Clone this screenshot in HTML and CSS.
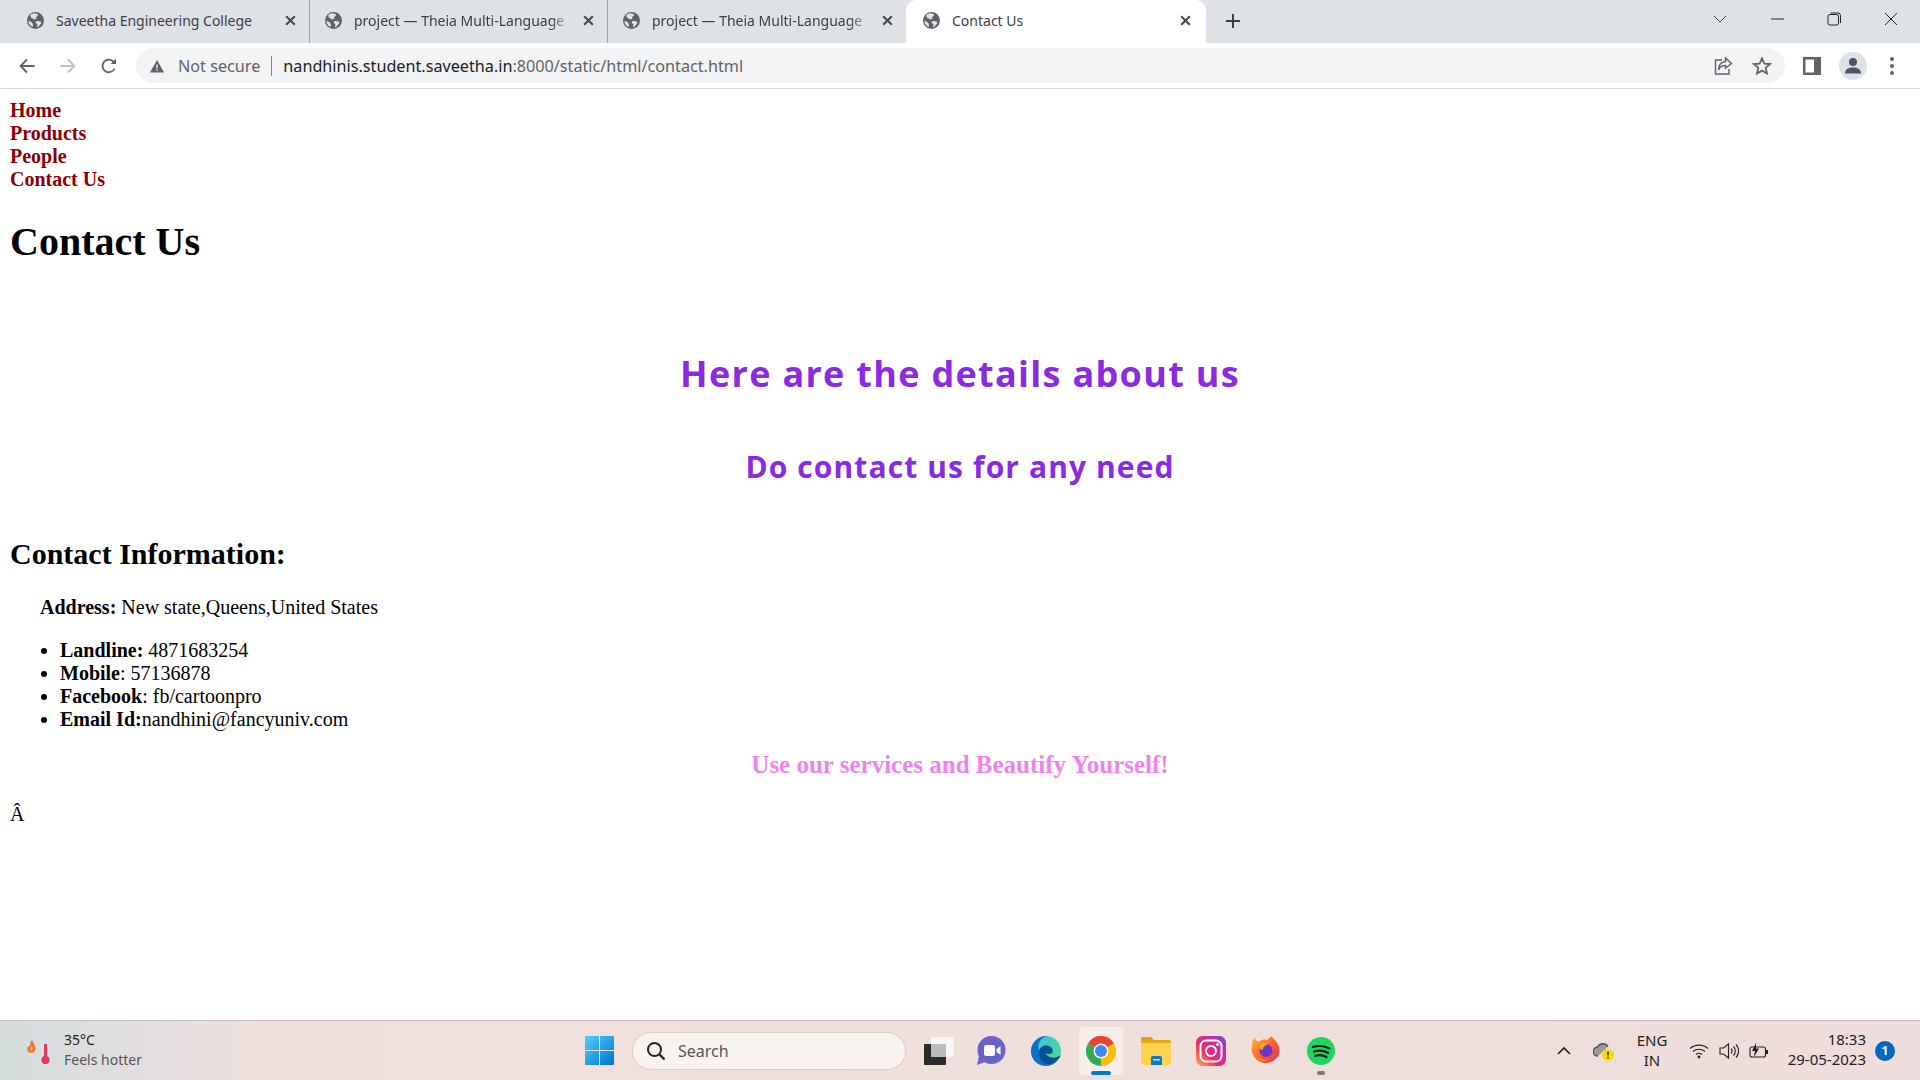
FILE: index.html
```html
<!DOCTYPE html>
<html lang="en">
<head>
  <meta charset="UTF-8">
  <title>Contact Us</title>
  <link rel="stylesheet" href="styles.css">
</head>
<body>
  <svg class="defs" width="0" height="0">
    <symbol id="globe" viewBox="0 0 16 16">
      <circle cx="8" cy="8" r="8" fill="#5f6368"/>
      <path d="M3 2.6 6.4 1.2 9.6 1.6 10.6 3 8.4 5 9 6.4 6.6 7 5 5.8 3.6 5.2ZM8.6 8.4 12.6 8.8 13.6 10.4 11 13.6 9.4 14.4 9.8 11.6 8.2 10.4ZM1.4 8.2 4 9.4 5.6 11.4 5.4 14 3 12.6 1.6 10.4Z" fill="#dee1e6"/>
    </symbol>
    <symbol id="close" viewBox="0 0 12 12">
      <path d="M2 2 10 10M10 2 2 10" stroke="#45484c" stroke-width="1.9" fill="none"/>
    </symbol>
  </svg>

  <header class="browser">
    <div class="tabstrip">
      <div class="tab">
        <svg class="favicon"><use href="#globe"/></svg>
        <span class="tab-title">Saveetha Engineering College</span>
        <svg class="tab-close"><use href="#close"/></svg>
      </div>
      <div class="tab">
        <svg class="favicon"><use href="#globe"/></svg>
        <span class="tab-title tab-title-fade">project — Theia Multi-Language</span>
        <svg class="tab-close"><use href="#close"/></svg>
      </div>
      <div class="tab">
        <svg class="favicon"><use href="#globe"/></svg>
        <span class="tab-title tab-title-fade">project — Theia Multi-Language</span>
        <svg class="tab-close"><use href="#close"/></svg>
      </div>
      <div class="tab tab-active">
        <svg class="favicon"><use href="#globe"/></svg>
        <span class="tab-title">Contact Us</span>
        <svg class="tab-close"><use href="#close"/></svg>
      </div>
      <svg class="new-tab" width="16" height="16" viewBox="0 0 16 16"><path d="M8 1V15M1 8H15" stroke="#3c4043" stroke-width="2"/></svg>
      <div class="window-controls">
        <svg width="14" height="8" viewBox="0 0 14 8"><path d="M1 1 7 7 13 1" stroke="#45484c" fill="none"/></svg>
        <svg width="14" height="14" viewBox="0 0 14 14"><path d="M1 7H14" stroke="#222"/></svg>
        <svg width="14" height="14" viewBox="0 0 14 14"><rect x="1" y="2.5" width="10.5" height="10.5" rx="2" stroke="#222" fill="none"/><path d="M3.500 1H11A2.500 2.500 0 0 1 13.500 3.500V11" stroke="#222" fill="none"/></svg>
        <svg width="14" height="14" viewBox="0 0 14 14"><path d="M1 1 13 13M13 1 1 13" stroke="#222" fill="none"/></svg>
      </div>
    </div>
    <div class="toolbar">
      <svg class="nav-btn" width="18" height="18" viewBox="0 0 18 18"><path d="M16.500 9H2.500M9 2.500 2.500 9 9 15.500" stroke="#5f6368" stroke-width="1.800" fill="none"/></svg>
      <svg class="nav-btn" width="18" height="18" viewBox="0 0 18 18"><path d="M1.500 9H15.500M9 2.500 15.500 9 9 15.500" stroke="#bdc1c6" stroke-width="1.800" fill="none"/></svg>
      <svg class="nav-btn" width="18" height="18" viewBox="0 0 18 18"><path d="M14.600 11.500A6.300 6.300 0 1 1 13.800 5" stroke="#5f6368" stroke-width="1.800" fill="none"/><path d="M16 1.500V7H10.500Z" fill="#5f6368"/></svg>
      <div class="omnibox">
        <svg width="16" height="16" viewBox="0 0 16 16"><path d="M8 2 15 14.500H1Z" fill="#5f6368"/><path d="M8 6.500V10.500M8 11.500V13" stroke="#f1f3f4" stroke-width="1.300"/></svg>
        <span class="not-secure">Not secure</span>
        <span class="url"><b>nandhinis.student.saveetha.in</b>:8000/static/html/contact.html</span>
        <svg class="share" width="20" height="20" viewBox="0 0 20 20"><path d="M9 4H2.500V18H16V13" stroke="#5f6368" stroke-width="1.400" fill="none"/><path d="M12.500 2 18.500 7.500 12.500 12V9.500C9 9.500 6.500 11 5.500 14 5.500 9.500 8 6 12.500 5.500Z" stroke="#5f6368" stroke-width="1.400" fill="none"/></svg>
        <svg class="star" width="20" height="20" viewBox="0 0 20 20"><path d="M10 2.300 12.300 7.600 18 8.100 13.700 11.900 15 17.500 10 14.600 5 17.500 6.300 11.900 2 8.100 7.700 7.600Z" stroke="#5f6368" stroke-width="1.800" fill="none"/></svg>
      </div>
      <svg class="side-panel" width="18" height="18" viewBox="0 0 18 18"><rect width="18" height="18" fill="#5f6368"/><rect x="2.500" y="2.500" width="8.500" height="13" fill="#fff"/></svg>
      <div class="avatar">
        <svg width="18" height="18" viewBox="0 0 18 18"><circle cx="9" cy="5" r="4" fill="#4a5568"/><path d="M1 16.500C1 12 5 10.500 9 10.500S17 12 17 16.500Z" fill="#4a5568"/></svg>
      </div>
      <div class="menu-dots"><i></i><i></i><i></i></div>
    </div>
  </header>

  <main class="page">
    <nav class="site-nav">
      <a href="#">Home</a>
      <a href="#">Products</a>
      <a href="#">People</a>
      <a href="#">Contact Us</a>
    </nav>
    <h1>Contact Us</h1>
    <div class="intro">
      <h1>Here are the details about us</h1>
      <h2>Do contact us for any need</h2>
    </div>
    <h2 class="info-title">Contact Information:</h2>
    <p class="address"><b>Address:</b> New state,Queens,United States</p>
    <ul>
      <li><b>Landline:</b> 4871683254</li>
      <li><b>Mobile</b>: 57136878</li>
      <li><b>Facebook</b>: fb/cartoonpro</li>
      <li><b>Email Id:</b>nandhini@fancyuniv.com</li>
    </ul>
    <h3 class="slogan">Use our services and Beautify Yourself!</h3>
    <p class="stray">Â</p>
  </main>

  <footer class="taskbar">
    <div class="weather">
      <svg width="30" height="34" viewBox="0 0 30 34">
        <path d="M5 12C7 13 5 9 8 6 9 9 12 11 11.500 15 11.200 18 8.500 19 7 19 4 19 2.500 16 3.500 13Z" fill="#f0743a"/>
        <path d="M7 17C5.500 16 6 14 7.500 12.500 8.500 14 9.500 16 7 17Z" fill="#fbc65a"/>
        <rect x="17" y="2" width="9" height="24" rx="4.500" fill="#cfe3f5"/>
        <circle cx="21.500" cy="26" r="6.500" fill="#cfe3f5"/>
        <rect x="20" y="10" width="3" height="16" fill="#e8385a"/>
        <circle cx="21.500" cy="26" r="4.200" fill="#e8385a"/>
      </svg>
      <div class="weather-text">
        <span>35°C</span>
        <span class="feels">Feels hotter</span>
      </div>
    </div>
    <div class="apps">
      <svg class="start" width="29" height="29" viewBox="0 0 29 29">
        <defs>
          <linearGradient id="win" x1="0" y1="0" x2="1" y2="1"><stop offset="0" stop-color="#52cffb"/><stop offset="1" stop-color="#0071cf"/></linearGradient>
        </defs>
        <path d="M0 1A1 1 0 0 1 1 0H14V14H0ZM15 0H28A1 1 0 0 1 29 1V14H15ZM0 15H14V29H1A1 1 0 0 1 0 28ZM15 15H29V28A1 1 0 0 1 28 29H15Z" fill="url(#win)"/>
      </svg>
      <div class="search">
        <svg width="20" height="20" viewBox="0 0 20 20"><circle cx="8.500" cy="8.500" r="6.500" stroke="#222" stroke-width="2" fill="none"/><path d="M13.500 13.500 18.500 18.500" stroke="#222" stroke-width="2.400"/></svg>
        <span>Search</span>
      </div>
      <div class="app app-task-view">
        <svg width="30" height="28" viewBox="0 0 30 28"><rect x="7" y="0" width="23" height="20" rx="1" fill="#f6f6f6"/><rect x="0" y="7" width="22" height="21" rx="1" fill="#2a2a2a"/><rect x="7" y="7" width="15" height="13" fill="#bcbcbc"/></svg>
      </div>
      <div class="app">
        <svg width="30" height="30" viewBox="0 0 30 30"><circle cx="15.500" cy="14" r="14" fill="#6b62c9"/><path d="M3 20 1 29 9 26Z" fill="#6b62c9"/><rect x="8" y="9" width="11" height="11" rx="2" fill="#fff"/><path d="M20.500 13 24.500 10V19L20.500 16Z" fill="#fff"/></svg>
      </div>
      <div class="app">
        <svg width="32" height="32" viewBox="0 0 32 32">
          <defs><linearGradient id="edge" x1="0" y1="0" x2="1" y2="1"><stop offset="0" stop-color="#35c1f1"/><stop offset="1" stop-color="#53e07a"/></linearGradient></defs>
          <circle cx="16" cy="16" r="15" fill="url(#edge)"/>
          <path d="M1 16C1 7 9 1 17 1 10 3 7 9 9 16 11 24 19 29 27 26 24 29 20 31 16 31 7 31 1 24 1 16Z" fill="#0c70c4"/>
          <path d="M9 17C9 12 14 9.500 19 11 23 12.500 23.500 16.500 22 18 20 20 17 18 15 18.500 18 22 24 25 31 20 29 25 24 29 18 29 13 29 9 24 9 17Z" fill="#0a4f96"/>
        </svg>
      </div>
      <div class="app app-active">
        <svg width="30" height="30" viewBox="0 0 30 30">
          <path d="M15 15 2 7.500A15 15 0 0 1 28 7.500Z" fill="#ea4335"/>
          <path d="M15 15 28 7.500A15 15 0 0 1 15 30Z" fill="#fbbc04"/>
          <path d="M15 15 15 30A15 15 0 0 1 2 7.500Z" fill="#34a853"/>
          <circle cx="15" cy="15" r="7.500" fill="#fff"/>
          <circle cx="15" cy="15" r="6" fill="#4285f4"/>
        </svg>
        <i class="running running-blue"></i>
      </div>
      <div class="app">
        <svg width="30" height="28" viewBox="0 0 30 28"><path d="M0 2A2 2 0 0 1 2 0H10L13 3H28A2 2 0 0 1 30 5V8H0Z" fill="#e0a214"/><path d="M0 5H30V26A2 2 0 0 1 28 28H2A2 2 0 0 1 0 26Z" fill="#fcd34f"/><path d="M13 4 0 4V6H30V4Z" fill="#e6a81b"/><path d="M12 19H19Q21 19 21 21V28H10V21Q10 19 12 19Z" fill="#1175c8"/><rect x="12" y="22" width="7" height="1.500" fill="#fff" opacity=".8"/></svg>
      </div>
      <div class="app">
        <svg width="30" height="30" viewBox="0 0 30 30">
          <defs><linearGradient id="insta" x1="0" y1="1" x2="1" y2="0"><stop offset="0" stop-color="#fdb33b"/><stop offset=".4" stop-color="#f0276b"/><stop offset=".75" stop-color="#c02fb0"/><stop offset="1" stop-color="#5a52d6"/></linearGradient></defs>
          <rect width="30" height="30" rx="6.500" fill="url(#insta)"/>
          <rect x="4.500" y="4.500" width="21" height="21" rx="5.500" stroke="#fff" stroke-width="2" fill="none"/>
          <circle cx="15" cy="15" r="5" stroke="#fff" stroke-width="2" fill="none"/>
          <circle cx="21.500" cy="8.500" r="1.400" fill="#fff"/>
        </svg>
      </div>
      <div class="app">
        <svg width="30" height="30" viewBox="0 0 30 30">
          <defs><linearGradient id="fox" x1="0" y1="0" x2="1" y2="1"><stop offset="0" stop-color="#ffbe2e"/><stop offset=".55" stop-color="#ff5a35"/><stop offset="1" stop-color="#e8225a"/></linearGradient></defs>
          <path d="M1 10C1 6 2 3 4 1 4 4 6 5.500 8 5.500 11 3 14 3 17 4 16 3 19 2 20 0 23 3 29 8 28.500 16A14 14 0 1 1 1 10Z" fill="url(#fox)"/>
          <circle cx="15" cy="14.500" r="6.500" fill="#6a37c4"/>
          <path d="M9 9C11 6 16 7 17 9 14 9 12 11 12 14 9 14 8 11 9 9Z" fill="#ff9a2e"/>
          <path d="M4 17C6 23 14 26 21 22 24 20 24 17 23 14 25 20 18 27 10 25 7 24 5 21 4 17Z" fill="#ff8a1f"/>
        </svg>
      </div>
      <div class="app">
        <svg width="28" height="28" viewBox="0 0 28 28"><circle cx="14" cy="14" r="14" fill="#1ed760"/><path d="M6 10C11 8.500 17 8.700 22.500 11.500M7 14.500C11.500 13.200 16.500 13.500 21 16M8 18.800C12 17.800 16 18 19.500 20" stroke="#1a1a1a" stroke-width="2.200" stroke-linecap="round" fill="none"/></svg>
        <i class="running"></i>
      </div>
    </div>
    <div class="tray">
      <svg class="tray-chevron" width="14" height="9" viewBox="0 0 14 9"><path d="M1 8 7 2 13 8" stroke="#222" stroke-width="1.600" fill="none"/></svg>
      <svg class="tray-cloud" width="22" height="22" viewBox="0 0 22 22"><path d="M5 16A4.500 4.500 0 0 1 4.500 7 6 6 0 0 1 15 6.500" stroke="#555" stroke-width="1.500" fill="#9a9a9a"/><circle cx="15" cy="15" r="6" fill="#f7dc00"/><path d="M15 11.500V15.500M15 16.800V18.500" stroke="#222" stroke-width="1.500"/></svg>
      <div class="lang"><span>ENG</span><span>IN</span></div>
      <svg width="20" height="16" viewBox="0 0 20 16"><path d="M1 5.500C6 1 14 1 19 5.500M4 8.500C7.500 5.500 12.500 5.500 16 8.500M7 11.500C8.800 10 11.200 10 13 11.500" stroke="#222" stroke-width="1.200" fill="none"/><circle cx="10" cy="14" r="1.400" fill="#222"/></svg>
      <svg width="20" height="18" viewBox="0 0 20 18"><path d="M1 6H4.500L9.500 2V16L4.500 12H1Z" stroke="#222" stroke-width="1.100" fill="none"/><path d="M12 6.500A3.500 3.500 0 0 1 12 11.500M14.500 4.500A6.500 6.500 0 0 1 14.500 13.500M17 2.500A9.500 9.500 0 0 1 17 15.500" stroke="#222" stroke-width="1.100" fill="none"/></svg>
      <svg width="20" height="18" viewBox="0 0 20 18"><rect x="1" y="5" width="15.500" height="10" rx="2" stroke="#222" stroke-width="1.100" fill="none"/><rect x="17" y="8" width="2" height="4" fill="#222"/><path d="M7 1 3 9H6L5 15 10 6.500H7Z" fill="#222"/></svg>
      <div class="clock"><span>18:33</span><span>29-05-2023</span></div>
      <span class="badge">1</span>
    </div>
  </footer>
</body>
</html>
```

FILE: styles.css
```css
* { box-sizing: border-box; }
html, body { height: 100%; }
body { margin: 0; height: 1080px; overflow: hidden; display: flex; flex-direction: column; background: #fff; }
svg { flex: none; display: block; }
.defs { position: absolute; }

/* browser window top */
.browser { font-family: "Noto Sans", sans-serif; color: #3c4043; flex: none; }
.tabstrip { display: flex; align-items: center; height: 43px; padding-left: 12px; background: #dee1e6; }
.tab { display: flex; align-items: center; width: 298px; height: 43px; padding: 0 12px 2px 15px; font-size: 14px; border-right: 1px solid #9fa3a8; }
.tab:nth-child(3) { border-right: 0; }
.tab-active { width: 300px; background: #fff; border-right: 0; border-radius: 10px 10px 0 0; padding-left: 17px; padding-right: 14px; }
.favicon { width: 17px; height: 17px; }
.tab-title { flex: 1; margin-left: 12px; white-space: nowrap; overflow: hidden; }
.tab-title-fade { -webkit-mask-image: linear-gradient(to left, transparent 0, #000 24px); mask-image: linear-gradient(to left, transparent 0, #000 24px); }
.tab-close { width: 13px; height: 13px; margin-left: 8px; }
.new-tab { margin: 0 0 2px 19px; }
.window-controls { display: flex; align-items: center; gap: 43px; margin: 0 0 6px auto; padding-right: 22px; }

.toolbar { display: flex; align-items: center; height: 46px; padding-left: 18px; background: #fff; border-bottom: 1px solid #dadce0; }
.nav-btn { margin-right: 23px; }
.omnibox { display: flex; align-items: center; width: 1649px; height: 35px; margin-left: -5px; padding: 0 13px; background: #f1f3f4; border-radius: 18px; font-size: 16.2px; }
.not-secure { margin-left: 13px; padding-right: 11px; border-right: 1px solid #80868b; line-height: 20px; color: #5f6368; }
.url { margin-left: 11px; color: #5f6368; white-space: nowrap; }
.url b { font-weight: 400; color: #202124; }
.share { margin-left: auto; }
.star { margin-left: 19px; }
.side-panel { margin-left: 18px; }
.avatar { display: flex; align-items: center; justify-content: center; width: 28px; height: 28px; margin-left: 18px; background: #dee1e6; border-radius: 50%; }
.menu-dots { display: flex; flex-direction: column; gap: 3px; margin-left: 23px; }
.menu-dots i { width: 4px; height: 4px; background: #5f6368; border-radius: 50%; }

/* the page itself, at 125% zoom */
.page { flex: 1; min-height: 0; padding: 10px; font-family: "Liberation Serif", serif; font-size: 20px; color: #000; }
.site-nav a { display: block; color: #8b0000; font-weight: bold; text-decoration: none; }
.page h1 { margin: 26.8px 0; font-size: 40px; }
.intro { padding-top: 33px; text-align: center; font-family: "Open Sans", sans-serif; color: #8a2be2; }
.page .intro h1 { font-size: 36px; line-height: 46px; letter-spacing: 1.3px; }
.intro h2 { margin: 53px 0 0; font-size: 30px; line-height: 34px; letter-spacing: 1.1px; }
.info-title { margin: 53px 0 0; font-size: 30px; }
.address { margin: 25px 0 20px 30px; }
ul { margin: 20px 0; padding-left: 50px; }
.slogan { margin: 19px 0 24px; font-size: 25px; text-align: center; color: #ee82ee; }
.stray { margin: 20px 0; }

/* windows taskbar */
.taskbar { flex: none; display: flex; align-items: center; height: 60px; border-top: 1px solid #c4bdbb; font-family: "Noto Sans", sans-serif; font-size: 14px; color: #222; background: linear-gradient(90deg, #d4dcdc 0, #e4dfe0 8%, #f1dfdb 15%, #f0e0dc 40%, #efdfdb 70%, #efdcdc 100%); }
.weather { display: flex; align-items: center; gap: 10px; width: 585px; padding-left: 24px; }
.weather-text { display: flex; flex-direction: column; margin-top: -2px; line-height: 20px; font-size: 14px; }
.feels { color: #555; }
.apps { display: flex; align-items: center; }
.search { display: flex; align-items: center; gap: 12px; width: 274px; height: 38px; margin-left: 18px; margin-right: 8px; padding-left: 13px; background: #f8f2f0; border: 1px solid #dcccc8; border-radius: 19px; font-size: 16px; color: #555; }
.app { position: relative; display: flex; align-items: center; justify-content: center; width: 43px; height: 48px; margin-right: 12px; border-radius: 4px; }
.app-task-view { padding-left: 6px; }
.app-task-view svg { margin-right: -1px; }
.app-active { background: #f6eeeb; box-shadow: 3px 0 0 -1px #f3e8e4; }
.running { position: absolute; bottom: 0; left: 50%; width: 8px; height: 4px; margin-left: -4px; background: #7d7775; border-radius: 2px; }
.running-blue { width: 20px; margin-left: -10px; background: #0078d4; }
.tray { display: flex; align-items: center; margin-left: auto; padding-right: 25px; font-size: 15px; }
.tray-chevron { margin-right: 12px; }
.tray-cloud { margin-right: 18px; }
.lang { display: flex; flex-direction: column; align-items: center; width: 38px; margin: -2px 18px 0 0; line-height: 20px; }
.tray > svg + svg { margin-left: 10px; }
.clock { display: flex; flex-direction: column; align-items: flex-end; width: 97px; margin-top: -3px; line-height: 20px; }
.badge { display: flex; align-items: center; justify-content: center; width: 20px; height: 20px; margin-left: 9px; background: #0067c0; border-radius: 50%; color: #fff; font-size: 12px; font-weight: 700; }
```
